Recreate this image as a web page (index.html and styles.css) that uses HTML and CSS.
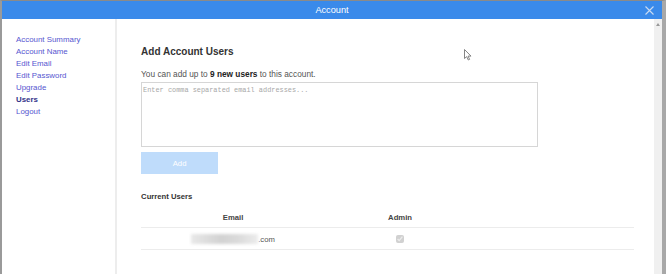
FILE: index.html
```html
<!DOCTYPE html>
<html lang="en">
<head>
  <meta charset="UTF-8">
  <title>Account</title>
  <link rel="stylesheet" href="styles.css">
</head>
<body>
  <div class="window">
    <div class="titlebar">
      <span class="title">Account</span>
      <svg class="close" width="9" height="9" viewBox="0 0 9 9"><path d="M0.5 0.5L8.5 8.5M8.5 0.5L0.5 8.5" stroke="#c9daf2" stroke-width="1.1"/></svg>
    </div>
    <div class="body">
      <!-- Menu -->
      <ul class="menu">
        <li><a href="#">Account Summary</a></li>
        <li><a href="#">Account Name</a></li>
        <li><a href="#">Edit Email</a></li>
        <li><a href="#">Edit Password</a></li>
        <li><a href="#">Upgrade</a></li>
        <li><a href="#" class="active">Users</a></li>
        <li><a href="#">Logout</a></li>
      </ul>

      <div class="content">
        <h2>Add Account Users</h2>
        <p class="info">You can add up to <b>9 new users</b> to this account.</p>
        <textarea placeholder="Enter comma separated email addresses..."></textarea>
        <button class="add-btn">Add</button>

        <h3>Current Users</h3>
        <table class="users">
          <thead>
            <tr><th class="col-email">Email</th><th class="col-admin">Admin</th><th></th></tr>
          </thead>
          <tbody>
            <tr>
              <td class="col-email"><span class="blur"></span>.com</td>
              <td class="col-admin"><input type="checkbox" checked disabled></td>
              <td></td>
            </tr>
          </tbody>
        </table>

        <svg class="cursor" width="9" height="12" viewBox="0 0 9 12"><path d="M0.5 0.5V9.5L2.7 7.6L4.3 11L5.6 10.4L4.1 7.1H7Z" fill="#fff" stroke="#777" stroke-width="0.9"/></svg>
      </div>

      <div class="scrollbar"><span class="arrow"></span></div>
    </div>
  </div>
</body>
</html>
```

FILE: styles.css
```css
html, body {
  margin: 0;
  padding: 0;
  height: 100%;
}

body {
  font-family: "Liberation Sans", Arial, sans-serif;
  background-color: #fff;
}

.window {
  height: 274px;
  display: flex;
  flex-direction: column;
  border-left: 2px solid #9a9a9a;
  border-right: 4px solid #a8a8a8;
  border-top: 1px solid #8a8a8a;
  box-sizing: border-box;
}

.titlebar {
  height: 18px;
  background-color: #3a8aea;
  display: flex;
  align-items: center;
  justify-content: center;
  position: relative;
}

.title {
  color: #fff;
  font-size: 9.2px;
}

.close {
  position: absolute;
  right: 8px;
  top: 5px;
}

.body {
  flex: 1;
  display: flex;
  position: relative;
}

.menu {
  list-style: none;
  margin: 0;
  padding: 12px 0 0 14px;
  width: 100px;
  border-right: 2px solid #ededed;
}

.menu li {
  height: 12px;
  line-height: 12px;
}

.menu a {
  font-size: 7.9px;
  color: #5656d0;
  text-decoration: none;
}

.menu a.active {
  color: #33338a;
  font-weight: bold;
}

.content {
  flex: 1;
  padding: 0 20px 0 24px;
  position: relative;
}

h2 {
  font-size: 10px;
  color: #333;
  margin: 25px 0 0 0;
  line-height: 16px;
}

.info {
  font-size: 8.3px;
  color: #555;
  margin: 8px 0 0 0;
  line-height: 12px;
}

.info b {
  color: #222;
}

textarea {
  display: block;
  width: 397px;
  height: 65px;
  margin-top: 2px;
  box-sizing: border-box;
  border: 1px solid #d6d6d6;
  padding: 3px 1px;
  font-family: "Liberation Mono", "Courier New", monospace;
  font-size: 6.9px;
  resize: none;
}

textarea::placeholder {
  color: #a8a8a8;
}

.add-btn {
  display: block;
  width: 77px;
  height: 22px;
  margin-top: 5px;
  background-color: #bfdcfb;
  border: none;
  color: #fff;
  font-family: "Liberation Sans", Arial, sans-serif;
  font-size: 7.7px;
  padding: 0;
}

h3 {
  font-size: 7.7px;
  color: #333;
  margin: 17px 0 0 0;
  line-height: 12px;
}

.users {
  width: 493px;
  border-collapse: collapse;
  margin-top: 4px;
  font-size: 7.7px;
  color: #555;
}

.users th {
  font-weight: bold;
  color: #444;
  height: 20px;
  padding: 0;
}

.users td {
  height: 21px;
  padding: 0;
  border-top: 1px solid #ececec;
  border-bottom: 1px solid #ececec;
}

.col-email {
  width: 184px;
  text-align: center;
}

.col-admin {
  width: 150px;
  text-align: center;
}

.blur {
  display: inline-block;
  width: 67px;
  height: 10px;
  vertical-align: -2px;
  background: linear-gradient(90deg, #e8e8e8, #d2d2d2 45%, #dadada 70%, #ececec);
  filter: blur(1.5px);
}

.users input {
  width: 8px;
  height: 8px;
  margin: 0;
  vertical-align: middle;
}

.cursor {
  position: absolute;
  left: 347px;
  top: 30px;
}

.scrollbar {
  width: 8px;
  background-color: #f0f0f0;
  position: relative;
}

.arrow {
  position: absolute;
  top: 4px;
  left: 2px;
  border-left: 2px solid transparent;
  border-right: 2px solid transparent;
  border-bottom: 3px solid #999;
}
```
